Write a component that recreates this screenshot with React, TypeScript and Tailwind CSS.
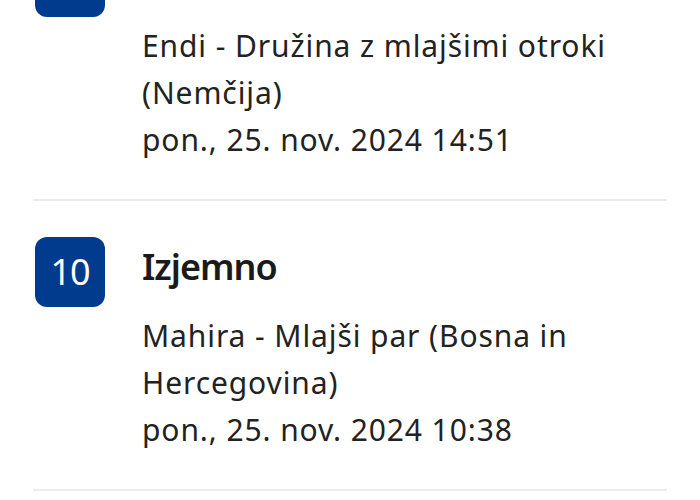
const items = [
  {
    score: "9",
    title: "Odlično",
    lines: ["Endi - Družina z mlajšimi otroki", "(Nemčija)"],
    date: "pon., 25. nov. 2024 14:51",
  },
  {
    score: "10",
    title: "Izjemno",
    lines: ["Mahira - Mlajši par (Bosna in", "Hercegovina)"],
    date: "pon., 25. nov. 2024 10:38",
  },
];

function ReviewRow({ score, title, lines, date }: (typeof items)[number]) {
  return (
    <div>
      <div className="flex gap-[37px] pl-[35px] pt-[36px] pb-[36px]">
        <div className="flex h-[70px] w-[70px] shrink-0 items-center justify-center rounded-[12px] bg-[#003b8e] text-[36px] tracking-[-1px] text-white">
          {score}
        </div>
        <div className="flex flex-col">
          <div className="text-[36px] font-semibold leading-[60px] tracking-[-1px] text-[#1a1a1a]">{title}</div>
          <div className="mt-[15px] text-[30px] leading-[47px] tracking-[0.9px] text-[#222]">
            {lines.map((l) => (
              <div key={l}>{l}</div>
            ))}
            <div>{date}</div>
          </div>
        </div>
      </div>
      <div className="mx-[33px] h-[2px] bg-[#ececec]" />
    </div>
  );
}

export default function App() {
  return (
    <div className="h-[500px] w-[700px] overflow-hidden bg-white" style={{ fontFamily: '"Noto Sans", sans-serif' }}>
      <div className="-mt-[89px]">
        {items.map((it) => (
          <ReviewRow key={it.score} {...it} />
        ))}
      </div>
    </div>
  );
}
